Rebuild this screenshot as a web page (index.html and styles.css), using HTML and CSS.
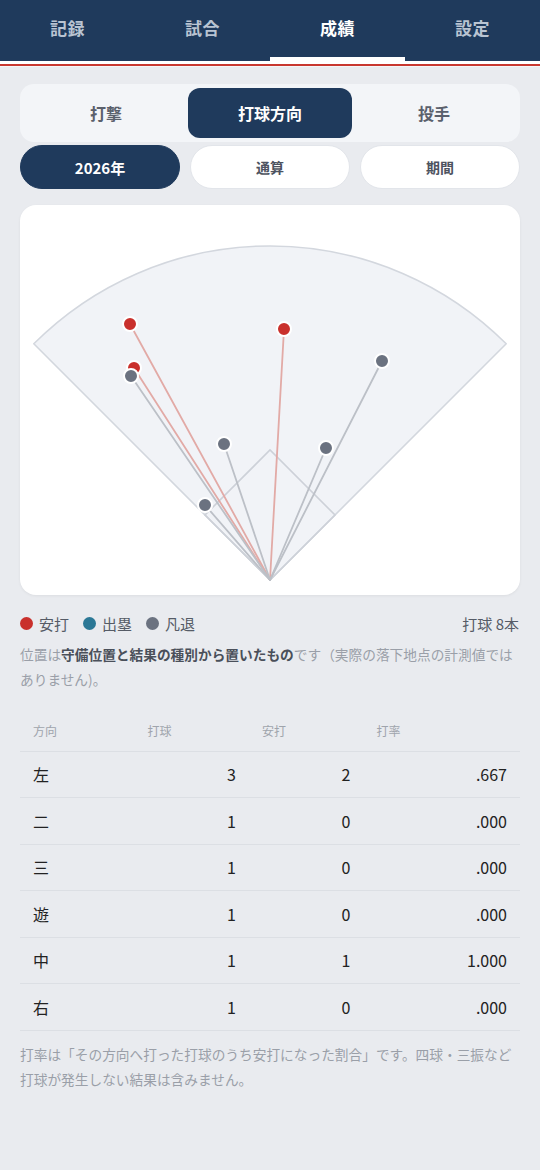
FILE: index.html
```html
<!DOCTYPE html>
<html lang="ja">
<head>
<meta charset="utf-8">
<title>成績</title>
<link rel="stylesheet" href="styles.css">
</head>
<body>
<nav class="topnav">
  <div class="tab">記録</div>
  <div class="tab">試合</div>
  <div class="tab active">成績</div>
  <div class="tab">設定</div>
</nav>
<div class="stripe"></div>
<main class="main">
  <div class="seg">
    <div class="seg-item">打撃</div>
    <div class="seg-item active">打球方向</div>
    <div class="seg-item">投手</div>
  </div>
  <div class="pills">
    <div class="pill active">2026年</div>
    <div class="pill">通算</div>
    <div class="pill">期間</div>
  </div>
  <section class="card">
    <svg class="field" width="500" height="390" viewBox="0 0 500 390">
      <path d="M250 375 L13.8 138.8 A334 334 0 0 1 486.2 138.8 Z" fill="#f1f3f7" stroke="#d3d7de" stroke-width="1.6" stroke-linejoin="round"/>
      <path d="M250 375 L185 310 L250 245 L315 310 Z" fill="none" stroke="#cdd1d8" stroke-width="1.6"/>
      <g stroke-width="1.8" stroke-linecap="round">
        <line x1="250" y1="375" x2="110" y2="119" stroke="#e2aaa6"/>
        <line x1="250" y1="375" x2="264" y2="124" stroke="#e2aaa6"/>
        <line x1="250" y1="375" x2="114" y2="163" stroke="#e2aaa6"/>
        <line x1="250" y1="375" x2="111" y2="171" stroke="#bcc0c7"/>
        <line x1="250" y1="375" x2="362" y2="156" stroke="#bcc0c7"/>
        <line x1="250" y1="375" x2="204" y2="239" stroke="#bcc0c7"/>
        <line x1="250" y1="375" x2="306" y2="243" stroke="#bcc0c7"/>
        <line x1="250" y1="375" x2="185" y2="300" stroke="#bcc0c7"/>
      </g>
      <g stroke="#ffffff" stroke-width="2">
        <circle cx="110" cy="119" r="7" fill="#c9302c"/>
        <circle cx="264" cy="124" r="7" fill="#c9302c"/>
        <circle cx="114" cy="163" r="7" fill="#c9302c"/>
        <circle cx="111" cy="171" r="7" fill="#6b7280"/>
        <circle cx="362" cy="156" r="7" fill="#6b7280"/>
        <circle cx="204" cy="239" r="7" fill="#6b7280"/>
        <circle cx="306" cy="243" r="7" fill="#6b7280"/>
        <circle cx="185" cy="300" r="7" fill="#6b7280"/>
      </g>
    </svg>
  </section>
  <div class="legend">
    <div class="legend-items">
      <span class="lg"><i class="dot red"></i>安打</span>
      <span class="lg"><i class="dot teal"></i>出塁</span>
      <span class="lg"><i class="dot gray"></i>凡退</span>
    </div>
    <div class="count">打球 8本</div>
  </div>
  <p class="note">位置は<b>守備位置と結果の種別から置いたもの</b>です（実際の落下地点の計測値では<br>ありません)。</p>
  <div class="table">
    <div class="row head">
      <div>方向</div><div>打球</div><div>安打</div><div>打率</div>
    </div>
    <div class="row">
      <div>左</div><div class="num">3</div><div class="num">2</div><div class="num">.667</div>
    </div>
    <div class="row">
      <div>二</div><div class="num">1</div><div class="num">0</div><div class="num">.000</div>
    </div>
    <div class="row">
      <div>三</div><div class="num">1</div><div class="num">0</div><div class="num">.000</div>
    </div>
    <div class="row">
      <div>遊</div><div class="num">1</div><div class="num">0</div><div class="num">.000</div>
    </div>
    <div class="row">
      <div>中</div><div class="num">1</div><div class="num">1</div><div class="num">1.000</div>
    </div>
    <div class="row">
      <div>右</div><div class="num">1</div><div class="num">0</div><div class="num">.000</div>
    </div>
  </div>
  <p class="note foot">打率は「その方向へ打った打球のうち安打になった割合」です。四球・三振など<br>打球が発生しない結果は含みません。</p>
</main>
</body>
</html>
```

FILE: styles.css
```css
* { box-sizing: border-box; }
html, body {
  margin: 0;
  padding: 0;
  background: #e9ebef;
  font-family: "Noto Sans CJK JP", "Noto Sans", sans-serif;
  color: #222;
}
.topnav {
  display: grid;
  grid-template-columns: repeat(4, 1fr);
  height: 61px;
  background: #1f3a5c;
}
.tab {
  display: flex;
  align-items: center;
  justify-content: center;
  padding-bottom: 6px;
  font-size: 17px;
  font-weight: 700;
  color: #b9c4d2;
  letter-spacing: 0.5px;
}
.tab.active {
  color: #ffffff;
  border-bottom: 4px solid #ffffff;
  padding-bottom: 2px;
}
.stripe {
  height: 6px;
  border-top: 3px solid #ffffff;
  border-bottom: 1px solid #f4f5f7;
  background: #c8372f;
}
.main {
  padding: 17px 20px 40px;
}
.seg {
  display: grid;
  grid-template-columns: repeat(3, 1fr);
  height: 58px;
  padding: 4px;
  background: #f3f5f8;
  border-radius: 14px;
}
.seg-item {
  display: flex;
  align-items: center;
  justify-content: center;
  font-size: 16px;
  font-weight: 700;
  color: #5a606c;
  border-radius: 12px;
}
.seg-item.active {
  background: #1f3a5c;
  color: #ffffff;
}
.pills {
  display: grid;
  grid-template-columns: repeat(3, 1fr);
  gap: 10px;
  margin-top: 3px;
}
.pill {
  height: 44px;
  display: flex;
  align-items: center;
  justify-content: center;
  border-radius: 22px;
  background: #ffffff;
  border: 1px solid #e2e5ea;
  font-size: 14px;
  font-weight: 700;
  color: #4d5360;
}
.pill.active {
  background: #1f3a5c;
  border-color: #1f3a5c;
  color: #ffffff;
  font-size: 15px;
}
.card {
  margin-top: 16px;
  height: 390px;
  background: #ffffff;
  border-radius: 16px;
  box-shadow: 0 1px 3px rgba(0, 0, 0, 0.06);
  overflow: hidden;
}
.field { display: block; }
.legend {
  display: flex;
  justify-content: space-between;
  align-items: center;
  margin-top: 17px;
  height: 22px;
  font-size: 15px;
  color: #555b66;
}
.legend-items {
  display: flex;
  gap: 14px;
}
.lg {
  display: flex;
  align-items: center;
  gap: 6px;
}
.dot {
  display: inline-block;
  width: 13px;
  height: 13px;
  border-radius: 50%;
}
.dot.red { background: #c9302c; }
.dot.teal { background: #2b7896; }
.dot.gray { background: #6b7280; }
.count { padding-right: 1px; }
.note {
  margin: 8px 0 0;
  font-size: 13.7px;
  line-height: 25px;
  color: #9a9fa8;
}
.note b {
  font-weight: 700;
  color: #4a505a;
}
.table {
  margin-top: 18px;
}
.row {
  display: grid;
  grid-template-columns: 114.5px 114.5px 114.5px 1fr;
  height: 46.5px;
  align-items: center;
  border-bottom: 1px solid #dcdfe4;
  font-size: 16px;
  color: #222;
}
.row > div {
  padding: 0 13px;
}
.row .num {
  text-align: right;
}
.row.head {
  height: 41.5px;
  font-size: 12px;
  color: #9fa4ac;
}
.note.foot {
  margin-top: 11px;
}
```
